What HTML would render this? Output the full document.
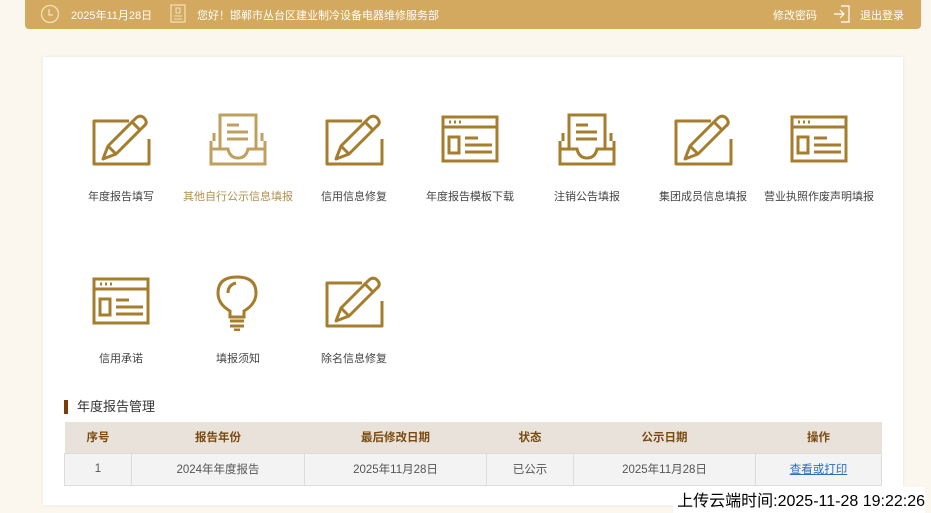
<!DOCTYPE html>
<html><head><meta charset="utf-8"><style>
*{margin:0;padding:0;box-sizing:border-box}
body{width:931px;height:511px;background:#fbf7ee;font-family:"Liberation Sans","Noto Sans CJK SC",sans-serif;position:relative;overflow:hidden}
.top{position:absolute;left:25px;top:0;width:896px;height:29px;background:#d2a95e;border-radius:0 0 4px 4px;color:#fff;font-size:11px}
.top span{position:absolute;top:7px}
.card{position:absolute;left:43px;top:57px;width:860px;height:448px;background:#fff;box-shadow:0 0 3px rgba(0,0,0,.08)}
.it{position:absolute;width:130px;text-align:center;font-size:11px;color:#444}
.it svg{display:block;margin:0 auto}
.it div{margin-top:19px}
.ttl{position:absolute;left:64px;top:400px;font-size:13px;color:#333;padding-left:9px;border-left:4px solid #7a3d0a;line-height:14px}
table{position:absolute;left:64px;top:422px;width:818px;border-collapse:collapse;font-size:11.5px;text-align:center}
th{background:#e8e2da;color:#7a4a10;height:31px;font-weight:bold}
td{background:#f3f3f3;color:#555;height:32px;border:1px solid #dcdcdc}
a{color:#2a6fc4}
.stamp{position:absolute;right:6px;top:487px;background:#fff;font-size:16px;color:#000;padding:0 0 2px 4px}
</style></head><body>
<div class="top">
<svg style="position:absolute;left:15px;top:4px" width="20" height="20" viewBox="0 0 20 20"><circle cx="10" cy="10" r="8.5" fill="none" stroke="#f3e2c0" stroke-width="1.3"/><path d="M9 5V11H13" fill="none" stroke="#f3e2c0" stroke-width="1.3"/></svg>
<span style="left:46px">2025年11月28日</span>
<svg style="position:absolute;left:145px;top:4px" width="16" height="20" viewBox="0 0 16 20"><rect x="1" y="1" width="14" height="17" fill="none" stroke="#f3e2c0" stroke-width="1.2"/><rect x="6" y="4" width="4" height="5" fill="none" stroke="#f3e2c0"/><path d="M4 12H12M4 15H12" stroke="#f3e2c0"/></svg>
<span style="left:172px">您好！邯郸市丛台区建业制冷设备电器维修服务部</span>
<span style="left:748px">修改密码</span>
<svg style="position:absolute;left:808px;top:5px" width="18" height="18" viewBox="0 0 18 18"><path d="M8 1H16V17H8" fill="none" stroke="#fff" stroke-width="1.2"/><path d="M1 9H11M7 5L11 9L7 13" fill="none" stroke="#fff" stroke-width="1.2"/></svg>
<span style="left:835px">退出登录</span>
</div>
<div class="card"></div>
<svg width="0" height="0" style="position:absolute">
<defs>
<g id="edit" fill="none" stroke-width="3" stroke-linejoin="round"><path d="M38 10H3V53H58V28"/><path d="M12 48L17 35L45 7Q50 3 54 8Q57 12 53 15L25 43Z"/><path d="M17 35L25 43M41 11L49 19"/></g>
<g id="tray" fill="none" stroke-width="3"><path d="M3 30V53H57V30"/><path d="M3 38H20Q22 47 30 47Q38 47 40 38H57"/><path d="M12 38V4H48V38"/><path d="M19 14H31M19 21H40M19 28H40"/><path d="M6 22V30M54 22V30"/></g>
<g id="win" fill="none" stroke-width="3"><rect x="3" y="6" width="54" height="44"/><path d="M3 16H57"/><path d="M9 11H11M14 11H16M19 11H21"/><rect x="9" y="26" width="10" height="16"/><path d="M25 27H38M25 34H52M25 41H52"/></g>
<g id="bulb" fill="none" stroke-width="3"><path d="M22 44V38Q10 31 10 20Q10 4 29 4Q48 4 48 20Q48 31 36 38V44Z"/><path d="M20 20Q20 12 28 10"/><path d="M22 48H36M22 53H36M26 57H32"/></g>
</defs></svg>
<div class="it" style="left:56px;top:111px"><svg width="60" height="58" viewBox="0 0 60 58" stroke="#a67d2c"><use href="#edit"/></svg><div>年度报告填写</div></div>
<div class="it" style="left:173px;top:111px"><svg width="60" height="58" viewBox="0 0 60 58" stroke="#c0a060"><use href="#tray"/></svg><div style="color:#b0904f">其他自行公示信息填报</div></div>
<div class="it" style="left:289px;top:111px"><svg width="60" height="58" viewBox="0 0 60 58" stroke="#a67d2c"><use href="#edit"/></svg><div>信用信息修复</div></div>
<div class="it" style="left:405px;top:111px"><svg width="60" height="58" viewBox="0 0 60 58" stroke="#a67d2c"><use href="#win"/></svg><div>年度报告模板下载</div></div>
<div class="it" style="left:522px;top:111px"><svg width="60" height="58" viewBox="0 0 60 58" stroke="#a67d2c"><use href="#tray"/></svg><div>注销公告填报</div></div>
<div class="it" style="left:638px;top:111px"><svg width="60" height="58" viewBox="0 0 60 58" stroke="#a67d2c"><use href="#edit"/></svg><div>集团成员信息填报</div></div>
<div class="it" style="left:754px;top:111px"><svg width="60" height="58" viewBox="0 0 60 58" stroke="#a67d2c"><use href="#win"/></svg><div>营业执照作废声明填报</div></div>
<div class="it" style="left:56px;top:273px"><svg width="60" height="58" viewBox="0 0 60 58" stroke="#a67d2c"><use href="#win"/></svg><div>信用承诺</div></div>
<div class="it" style="left:173px;top:273px"><svg width="60" height="58" viewBox="0 0 60 58" stroke="#a67d2c"><use href="#bulb"/></svg><div>填报须知</div></div>
<div class="it" style="left:289px;top:273px"><svg width="60" height="58" viewBox="0 0 60 58" stroke="#a67d2c"><use href="#edit"/></svg><div>除名信息修复</div></div>
<div class="ttl">年度报告管理</div>
<table><tr><th style="width:67px">序号</th><th style="width:173px">报告年份</th><th style="width:182px">最后修改日期</th><th style="width:87px">状态</th><th style="width:182px">公示日期</th><th>操作</th></tr>
<tr><td>1</td><td>2024年年度报告</td><td>2025年11月28日</td><td>已公示</td><td>2025年11月28日</td><td><a href="#">查看或打印</a></td></tr></table>
<div class="stamp">上传云端时间:2025-11-28 19:22:26</div>
</body></html>
